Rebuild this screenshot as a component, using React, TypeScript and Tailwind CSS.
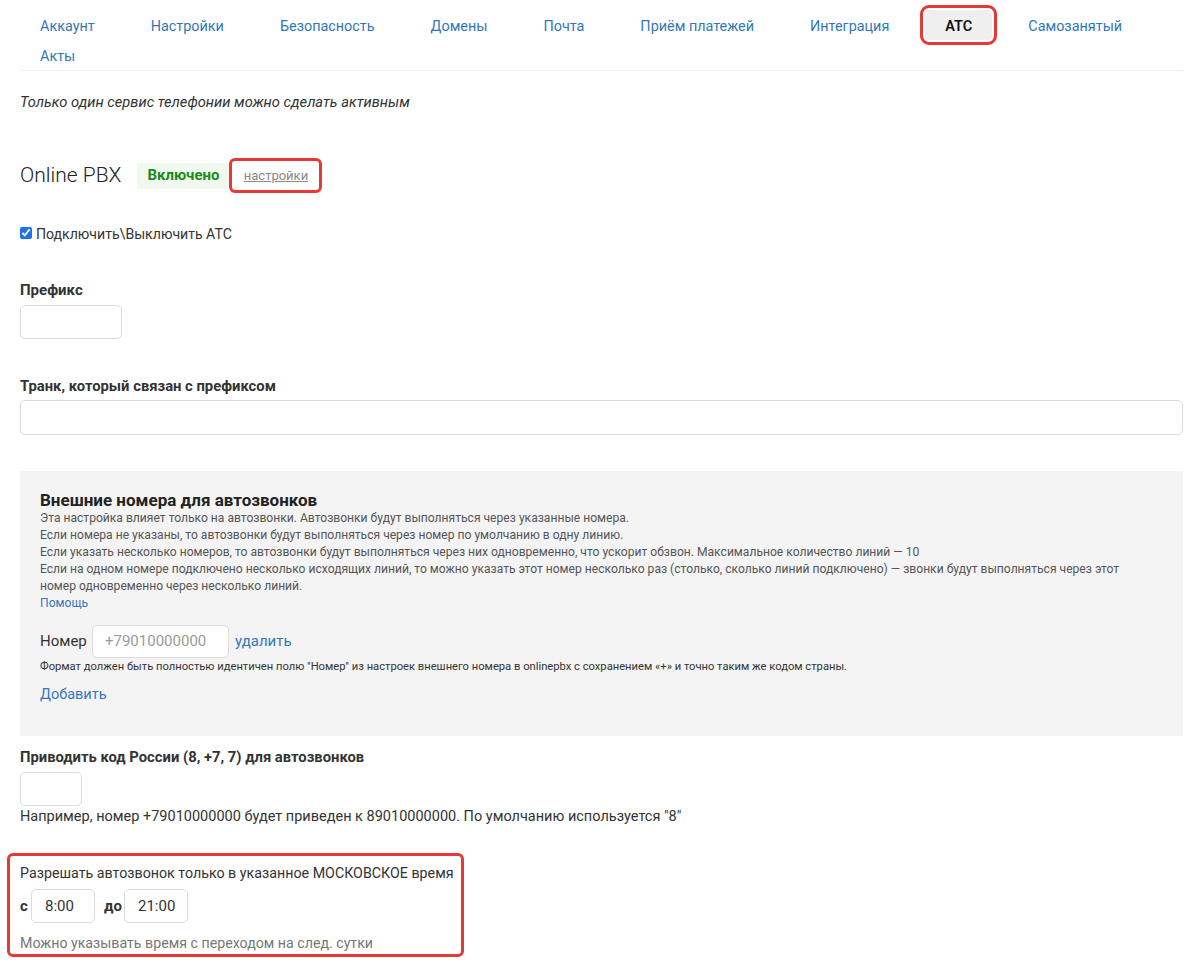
import React from "react";

const navRow1 = ["Аккаунт", "Настройки", "Безопасность", "Домены", "Почта", "Приём платежей", "Интеграция", "АТС", "Самозанятый"];

function NavItem({ label }: { label: string }) {
  const active = label === "АТС";
  if (active) {
    return (
      <div className="whitespace-nowrap h-[30px] px-5 leading-[33px] text-[14.5px] font-semibold text-[#111] bg-[#efefef] rounded-[4px] outline outline-[3px] outline-offset-[2px] outline-[#e53935]">
        {label}
      </div>
    );
  }
  return <div className="whitespace-nowrap h-[30px] px-5 leading-[34px] text-[14.4px] text-[#3377bb]">{label}</div>;
}

const inputCls = "border border-[#dcdcdc] rounded-[5px] bg-white";

export default function App() {
  return (
    <div className="w-[1200px] bg-white text-[#333] pl-5 pr-[17px]" style={{ fontFamily: "Roboto, 'Noto Sans', sans-serif" }}>
      {/* nav */}
      <div className="pt-[10px] border-b border-[#efefef]">
        <div className="flex gap-4">
          {navRow1.map((l) => (
            <NavItem key={l} label={l} />
          ))}
        </div>
        <div className="flex gap-4">
          <NavItem label="Акты" />
        </div>
      </div>

      <div className="mt-[21px] leading-5 text-[14.7px] italic text-[#333]">Только один сервис телефонии можно сделать активным</div>

      <div className="mt-[46px] h-[35px] flex items-center">
        <div className="text-[21px] font-light text-[#222]">Online PBX</div>
        <div className="ml-4 h-[26px] px-[10px] flex items-center bg-[#f0f9ef] text-[#1a8a1a] font-bold text-[15px]">Включено</div>
        <div className="h-[35px] w-[93px] flex items-center justify-center border-[3px] border-[#e53935] rounded-[6px] text-[13px] text-[#888] underline">
          настройки
        </div>
      </div>

      <label className="mt-[32px] h-5 flex items-center gap-[4px] text-[14.1px] text-[#333]">
        <input type="checkbox" defaultChecked className="w-[12px] h-[12px] accent-[#1a73e8] -mt-[4px]" />
        Подключить\Выключить АТС
      </label>

      <div className="mt-[35px] leading-5 text-[15px] font-bold text-[#333]">Префикс</div>
      <div className={`mt-[5px] w-[102px] h-[34px] ${inputCls}`} />

      <div className="mt-[37px] leading-5 text-[14.8px] font-bold text-[#333]">Транк, который связан с префиксом</div>
      <div className={`mt-[4px] w-full h-[35px] ${inputCls}`} />

      {/* gray box */}
      <div className="mt-[36px] h-[265px] bg-[#f4f4f4] px-5 pt-[19px]">
        <div className="leading-5 text-[17px] font-bold text-[#222]">Внешние номера для автозвонков</div>
        <div className="text-[12.1px] leading-[17px] text-[#555]">
          <div>Эта настройка влияет только на автозвонки. Автозвонки будут выполняться через указанные номера.</div>
          <div>Если номера не указаны, то автозвонки будут выполняться через номер по умолчанию в одну линию.</div>
          <div>Если указать несколько номеров, то автозвонки будут выполняться через них одновременно, что ускорит обзвон. Максимальное количество линий — 10</div>
          <div>
            Если на одном номере подключено несколько исходящих линий, то можно указать этот номер несколько раз (столько, сколько линий подключено) — звонки будут выполняться через этот
            <br />
            номер одновременно через несколько линий.
          </div>
          <div className="text-[#3377bb]">Помощь</div>
        </div>
        <div className="mt-[13px] flex items-center h-[33px]">
          <div className="text-[15px] text-[#333] w-[52px]">Номер</div>
          <div className={`w-[137px] h-[33px] ${inputCls} flex items-center pl-[12px] text-[15px] text-[#9a9a9a]`}>+79010000000</div>
          <div className="ml-[6px] text-[15px] text-[#3377bb]">удалить</div>
        </div>
        <div className="mt-[1px] leading-4 text-[11.2px] text-[#333]">
          Формат должен быть полностью идентичен полю "Номер" из настроек внешнего номера в onlinepbx с сохранением «+» и точно таким же кодом страны.
        </div>
        <div className="mt-[10px] leading-5 text-[14.5px] text-[#3377bb]">Добавить</div>
      </div>

      <div className="mt-[11px] leading-5 text-[14.8px] font-bold text-[#333]">Приводить код России (8, +7, 7) для автозвонков</div>
      <div className={`mt-[5px] w-[62px] h-[34px] ${inputCls}`} />
      <div className="mt-[1px] leading-5 text-[14.5px] text-[#333]">Например, номер +79010000000 будет приведен к 89010000000. По умолчанию используется "8"</div>

      <div className="mt-[26px] -ml-[13px] w-[457px] border-[3px] border-[#e53935] rounded-[6px] pl-[10px] pt-[7px] pb-[1px]">
        <div className="whitespace-nowrap leading-5 text-[14.25px] text-[#333]">Разрешать автозвонок только в указанное МОСКОВСКОЕ время</div>
        <div className="mt-[6px] flex items-center h-[34px]">
          <span className="text-[15px] font-bold text-[#333] w-[11px]">с</span>
          <div className={`w-[64px] h-[34px] ${inputCls} flex items-center pl-[13px] text-[15px] text-[#333]`}>8:00</div>
          <span className="ml-[9px] text-[15px] font-bold text-[#333] w-[20px]">до</span>
          <div className={`w-[64px] h-[34px] ${inputCls} flex items-center pl-[13px] text-[15px] text-[#333]`}>21:00</div>
        </div>
        <div className="mt-[10px] leading-5 text-[14.2px] text-[#777]">Можно указывать время с переходом на след. сутки</div>
      </div>
      <div className="h-[8px]" />
    </div>
  );
}
